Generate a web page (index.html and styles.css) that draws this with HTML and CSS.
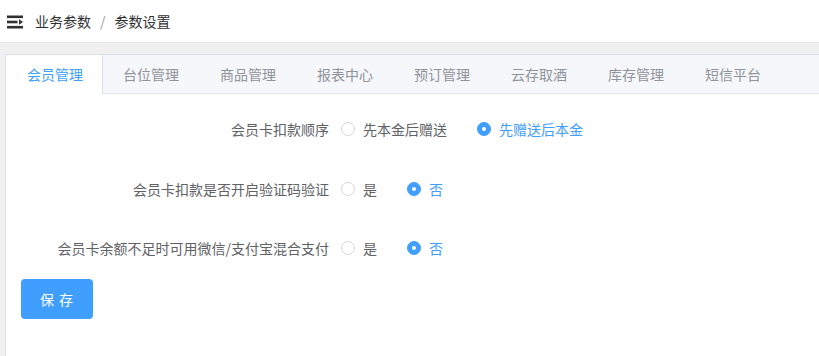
FILE: index.html
```html
<!DOCTYPE html>
<html lang="zh-CN">
<head>
<meta charset="utf-8">
<title>参数设置</title>
<link rel="stylesheet" href="styles.css">
</head>
<body>
<header class="topbar">
  <svg class="fold-icon" width="16" height="14" viewBox="0 0 16 14" aria-hidden="true">
    <rect x="0" y="0.5" width="16" height="2.6" fill="#303133"/>
    <rect x="0" y="5.7" width="10.5" height="2.6" fill="#303133"/>
    <path d="M12 4.3 L16 7 L12 9.7 Z" fill="#303133"/>
    <rect x="0" y="10.9" width="16" height="2.6" fill="#303133"/>
  </svg>
  <nav class="crumbs">
    <span class="crumb">业务参数</span>
    <span class="sep">/</span>
    <span class="crumb">参数设置</span>
  </nav>
</header>
<main class="page">
  <section class="card">
    <div class="tabs">
      <div class="tab active">会员管理</div>
      <div class="tab">台位管理</div>
      <div class="tab">商品管理</div>
      <div class="tab">报表中心</div>
      <div class="tab">预订管理</div>
      <div class="tab">云存取酒</div>
      <div class="tab">库存管理</div>
      <div class="tab">短信平台</div>
    </div>
    <div class="content">
      <div class="form-item">
        <label class="form-label">会员卡扣款顺序</label>
        <div class="radios">
          <span class="radio"><span class="dot"></span><span class="rlabel">先本金后赠送</span></span>
          <span class="radio checked"><span class="dot"></span><span class="rlabel">先赠送后本金</span></span>
        </div>
      </div>
      <div class="form-item">
        <label class="form-label">会员卡扣款是否开启验证码验证</label>
        <div class="radios">
          <span class="radio"><span class="dot"></span><span class="rlabel">是</span></span>
          <span class="radio checked"><span class="dot"></span><span class="rlabel">否</span></span>
        </div>
      </div>
      <div class="form-item">
        <label class="form-label">会员卡余额不足时可用微信/支付宝混合支付</label>
        <div class="radios">
          <span class="radio"><span class="dot"></span><span class="rlabel">是</span></span>
          <span class="radio checked"><span class="dot"></span><span class="rlabel">否</span></span>
        </div>
      </div>
      <button class="btn-save">保 存</button>
    </div>
  </section>
</main>
</body>
</html>
```

FILE: styles.css
```css
* { box-sizing: border-box; }
html, body { margin: 0; padding: 0; }
body {
  font-family: "Noto Sans CJK SC", "Noto Sans", "Liberation Sans", sans-serif;
  font-size: 14px;
  color: #606266;
  background: #f0f0f0;
  overflow: hidden;
  height: 356px;
}
.topbar {
  height: 43px;
  background: #fff;
  border-bottom: 1px solid #e8e8e8;
  display: flex;
  align-items: center;
  padding-left: 7px;
}
.fold-icon { display: block; margin-right: 12px; margin-top: 1px; }
.crumbs { display: flex; align-items: center; color: #303133; }
.crumb { color: #303133; }
.sep { color: #9a9da3; margin: 0 9px 0 9px; }
.page {
  padding: 11px 0 0 5px;
}
.card {
  background: #fff;
  border: 1px solid #dcdfe6;
  border-right: none;
  border-bottom: none;
  height: 302px;
}
.tabs {
  display: flex;
  background: #f5f7fa;
  border-bottom: 1px solid #e4e7ed;
  height: 39px;
}
.tab {
  height: 39px;
  line-height: 38px;
  padding: 0 20px;
  color: #909399;
  border-right: 1px solid transparent;
  white-space: nowrap;
}
.tab.active {
  background: #fff;
  color: #409eff;
  border-right-color: #dcdfe6;
  height: 39px;
  padding-left: 21px;
  padding-right: 19px;
}
.content {
  padding: 15px;
}
.form-item {
  display: flex;
  align-items: center;
  height: 40px;
  margin-bottom: 19.5px;
}
.form-label {
  width: 320px;
  text-align: right;
  padding-right: 12px;
  color: #606266;
}
.radios { display: flex; align-items: center; }
.radio {
  display: inline-flex;
  align-items: center;
  margin-right: 30px;
  color: #606266;
}
.dot {
  width: 14px;
  height: 14px;
  border: 1px solid #d4d7de;
  border-radius: 50%;
  background: #fff;
  position: relative;
  flex: none;
}
.rlabel { padding-left: 8px; }
.radio.checked .dot {
  background: #409eff;
  border-color: #409eff;
}
.radio.checked .dot::after {
  content: "";
  position: absolute;
  left: 50%;
  top: 50%;
  width: 4px;
  height: 4px;
  margin: -2px 0 0 -2px;
  border-radius: 50%;
  background: #fff;
}
.radio.checked .rlabel { color: #409eff; }
.btn-save {
  display: block;
  margin-top: -9px;
  width: 72px;
  height: 40px;
  border: none;
  border-radius: 4px;
  background: #409eff;
  color: #fff;
  font-family: inherit;
  font-size: 14px;
  padding: 0;
  letter-spacing: 1px;
}
```
